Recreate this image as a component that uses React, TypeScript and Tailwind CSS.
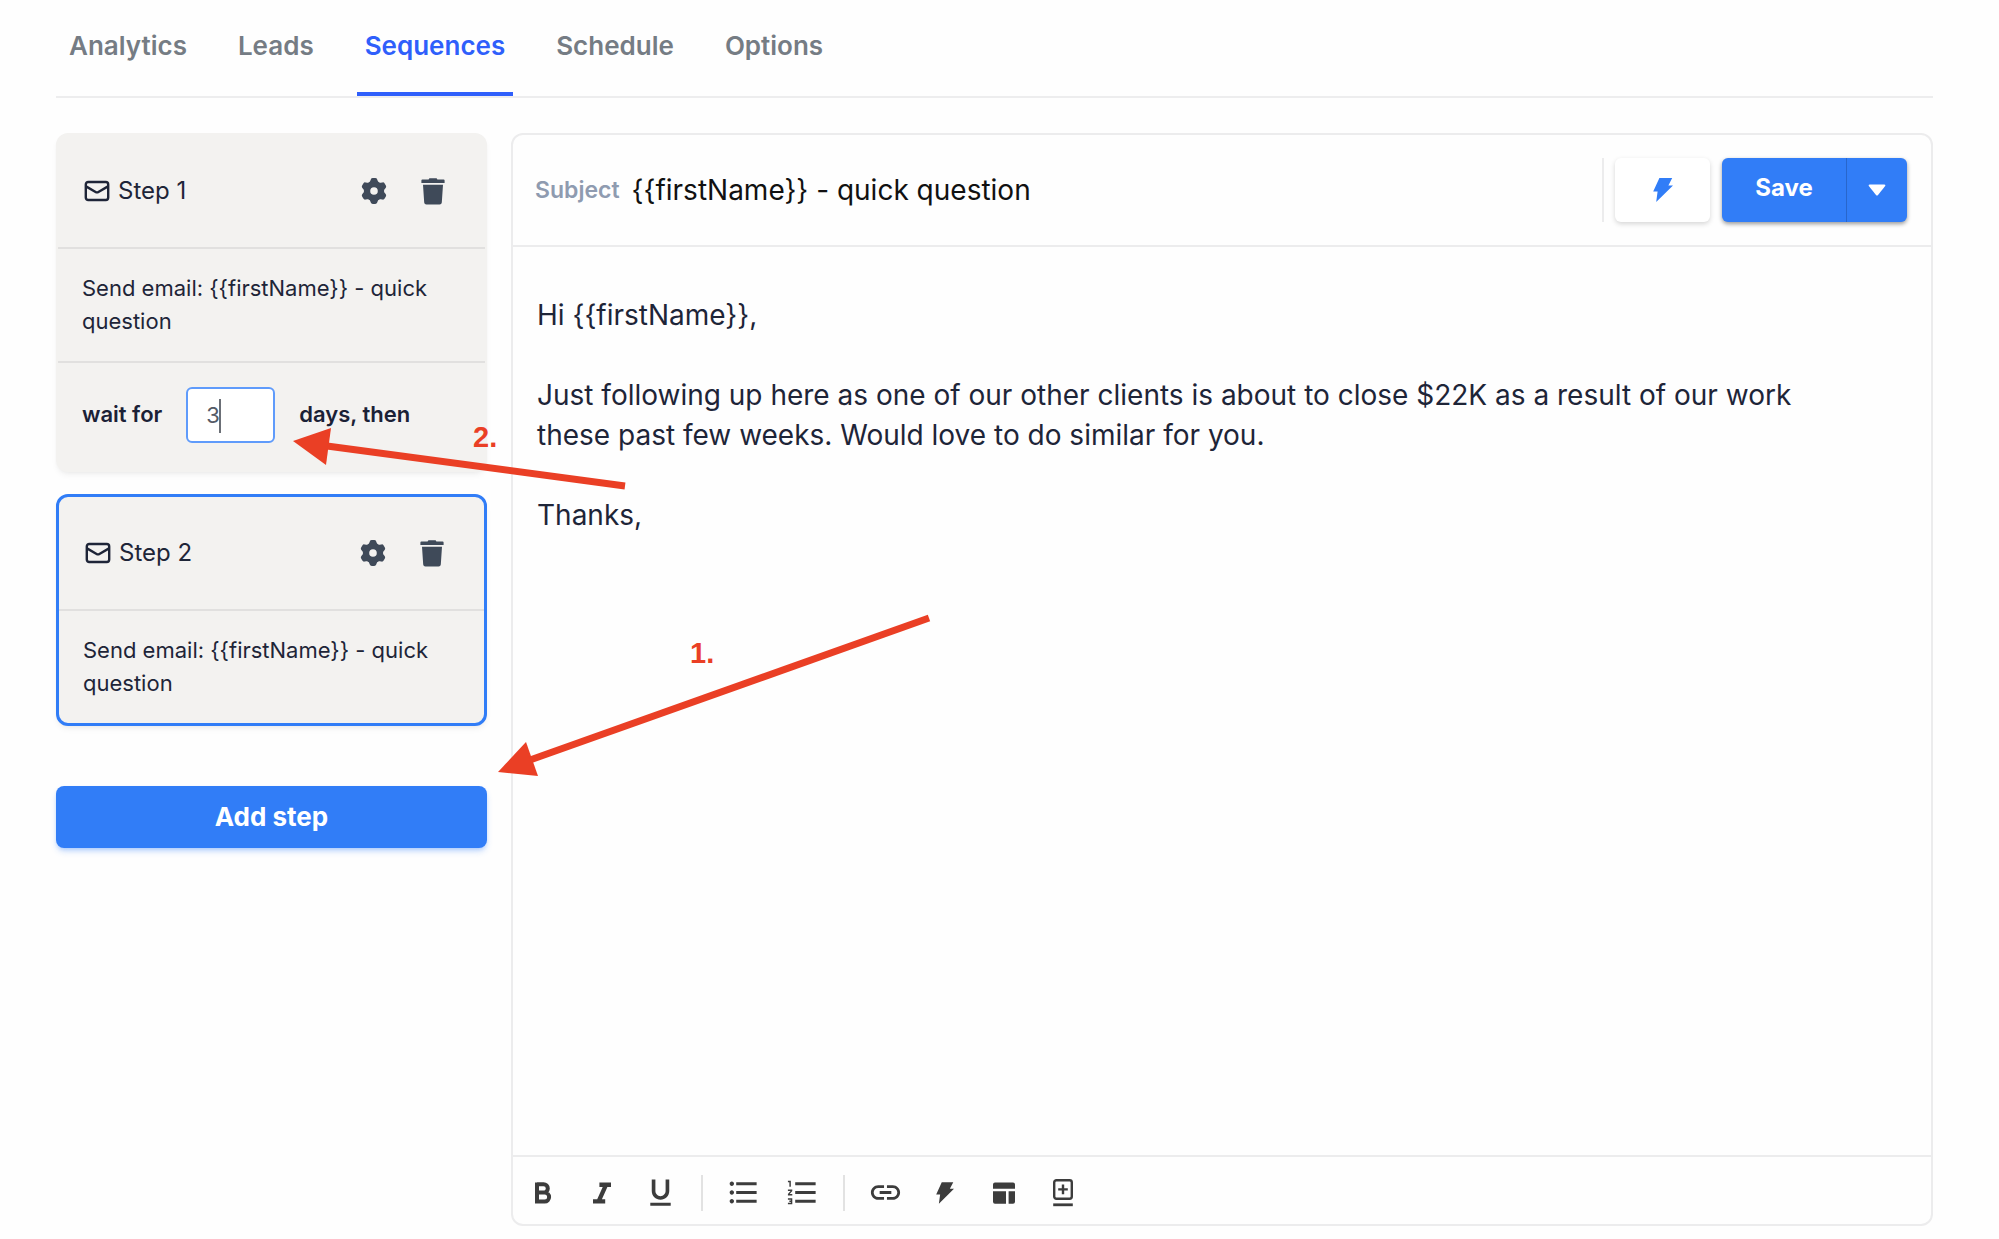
import React, { useState } from "react";
import { MdFormatListBulleted, MdFormatListNumbered, MdFormatUnderlined, MdLink } from "react-icons/md";

const TABS = ["Analytics", "Leads", "Sequences", "Schedule", "Options"];

function MailIcon() {
  return (
    <svg viewBox="0 0 26 22" className="h-[22px] w-[26px]" fill="none" stroke="currentColor" strokeWidth="2.4" aria-hidden="true">
      <rect x="1.8" y="2" width="22.4" height="18" rx="2.4" />
      <path d="M2 6.4L11.6 12a2.8 2.8 0 0 0 2.8 0L24 6.4" />
    </svg>
  );
}

function GearIcon() {
  return (
    <svg viewBox="0 0 26 26" className="size-[26px]" aria-hidden="true">
      <circle cx="13" cy="13" r="7" fill="none" stroke="currentColor" strokeWidth="6.4" />
      {[0, 60, 120, 180, 240, 300].map((angle) => (
        <path key={angle} d="M8.4 5L9.8 1.4Q10.2 0 11.8 0H14.2Q15.8 0 16.2 1.4L17.6 5Z" fill="currentColor" transform={`rotate(${angle} 13 13)`} />
      ))}
    </svg>
  );
}

function TrashIcon() {
  return (
    <svg viewBox="0 0 24 27" className="h-[27px] w-6" fill="currentColor" aria-hidden="true">
      <path d="M8.4 0.3H15.6L16.4 1.6H22.6Q23.6 1.6 23.6 2.6V5H0.4V2.6Q0.4 1.6 1.4 1.6H7.6ZM2 6.8H22L20.8 24.6Q20.6 26.6 18.6 26.6H5.4Q3.4 26.6 3.2 24.6Z" />
    </svg>
  );
}

function BoltIcon({ className }: { className: string }) {
  return (
    <svg viewBox="0 0 20 24" className={className} fill="currentColor" aria-hidden="true">
      <path d="M6.4 0H19.2L15.4 7.4H20L3.2 24L4.6 13.6H0.2Z" />
    </svg>
  );
}

function BoldIcon() {
  return (
    <svg viewBox="0 0 18 22" className="h-[22px] w-[18px]" fill="none" stroke="currentColor" strokeWidth="4" aria-hidden="true">
      <path d="M3 2.2H9.6a4.1 4.1 0 0 1 0 8.4H3M3 10.6H10.6a4.4 4.4 0 0 1 0 9H3M3 0.4V21.6" />
    </svg>
  );
}

function ItalicIcon() {
  return (
    <svg viewBox="0 0 18 22" className="h-[22px] w-[18px]" fill="currentColor" aria-hidden="true">
      <path d="M6.4 0.6H18V5H14.4L8.9 17.2H12.2V21.6H0V17.2H4.2L9.7 5H6.4Z" />
    </svg>
  );
}

function LayoutIcon() {
  return (
    <svg viewBox="0 0 22 22" className="size-[22px]" fill="currentColor" aria-hidden="true">
      <path d="M2 0.4H20a2 2 0 0 1 2 2V6.8H0V2.4A2 2 0 0 1 2 0.4ZM0 9.2H13V21.8H2a2 2 0 0 1-2-2ZM15.6 9.2H22V19.8a2 2 0 0 1-2 2H15.6Z" />
    </svg>
  );
}

function AddBlockIcon() {
  return (
    <svg viewBox="0 0 20 28" className="h-7 w-5" fill="none" stroke="currentColor" strokeWidth="2.4" aria-hidden="true">
      <rect x="1.2" y="1.2" width="17.6" height="18.6" rx="2.2" />
      <path d="M10 5.6V15.2M5.2 10.4H14.8" />
      <path d="M0.2 25.8H19.8" strokeWidth="2.8" />
    </svg>
  );
}

function StepHeader({ title }: { title: string }) {
  return (
    <div className="flex h-28 items-center pr-9 pl-[26px] text-[#1e2538]">
      <MailIcon />
      <h2 className="ml-2 grow text-[24px] leading-8">{title}</h2>
      <button type="button" aria-label={`${title} settings`} className="text-[#3f4a59]">
        <GearIcon />
      </button>
      <button type="button" aria-label={`Delete ${title}`} className="mr-1 ml-[34px] text-[#3f4a59]">
        <TrashIcon />
      </button>
    </div>
  );
}

function StepSummary() {
  return (
    <p className="border-t-2 border-[#e1e0df] py-[23px] pr-9 pl-6 text-[22px] leading-[33px] text-[#1e2538]">
      {"Send email: {{firstName}} - quick question"}
    </p>
  );
}

function Annotations() {
  return (
    <div className="pointer-events-none absolute top-0 left-0 text-[#ea3f25]">
      <svg width="1000" height="800" viewBox="0 0 1000 800" fill="currentColor" aria-hidden="true">
        <path d="M498 772L526 742L538 776Z" />
        <path d="M530 760L929 618" stroke="currentColor" strokeWidth="7" />
        <path d="M293 441L331 428L326 465Z" />
        <path d="M327 446L625 486" stroke="currentColor" strokeWidth="7" />
      </svg>
      <span className="absolute top-[421px] left-[473px] font-['Liberation_Sans',sans-serif] text-[29px] leading-8 font-bold">2.</span>
      <span className="absolute top-[637px] left-[690px] font-['Liberation_Sans',sans-serif] text-[29px] leading-8 font-bold">1.</span>
    </div>
  );
}

const TOOL = "flex w-[59px] shrink-0 items-center justify-center";

export default function App() {
  const [active, setActive] = useState("Sequences");
  const [days, setDays] = useState("3");
  const [subject, setSubject] = useState("{{firstName}} - quick question");
  const [body, setBody] = useState(
    "Hi {{firstName}},\n\nJust following up here as one of our other clients is about to close $22K as a result of our work these past few weeks. Would love to do similar for you.\n\nThanks,",
  );

  return (
    <div className="relative flex min-h-screen flex-col bg-[#fefefe] pr-[66px] pb-[13px] pl-14 font-['Inter',sans-serif]">
      <nav className="flex h-[98px] gap-[35px] border-b-2 border-[#ededee] pl-[5px]" aria-label="Campaign">
        {TABS.map((tab) => (
          <button
            key={tab}
            type="button"
            onClick={() => setActive(tab)}
            aria-current={tab === active ? "page" : undefined}
            className={
              tab === active
                ? "border-b-4 border-[#2f5ffb] px-2 pb-0.5 text-[26px] font-semibold text-[#2f5ffb]"
                : "border-b-4 border-transparent px-2 pb-0.5 text-[26px] font-semibold text-[#757c84]"
            }
          >
            {tab}
          </button>
        ))}
      </nav>

      <div className="mt-[35px] flex grow gap-6">
        <aside className="flex w-[431px] shrink-0 flex-col">
          <section className="rounded-xl border-2 border-[#f3f2f0] bg-[#f3f2f0] shadow-md shadow-black/5">
            <StepHeader title="Step 1" />
            <StepSummary />
            <div className="flex h-[109px] items-center border-t-2 border-[#e1e0df] pb-1 pl-6 text-[22px] font-semibold text-[#1b2136]">
              <label htmlFor="wait-days">wait for</label>
              <div className="relative mx-6">
                <input
                  id="wait-days"
                  value={days}
                  onChange={(e) => setDays(e.target.value)}
                  className="block h-14 w-[89px] rounded-md border-2 border-[#5f9bfb] bg-white px-[18px] text-[22px] font-normal text-[#555b66] caret-transparent outline-none"
                />
                <span className="pointer-events-none absolute top-3 left-[33px] h-[34px] w-0.5 bg-[#6b6f76]" />
              </div>
              <span>days, then</span>
            </div>
          </section>

          <section className="mt-[22px] rounded-xl border-[3px] border-[#317df7] bg-[#f3f2f0] shadow-md shadow-black/5">
            <StepHeader title="Step 2" />
            <StepSummary />
          </section>

          <button
            type="button"
            className="mt-[60px] h-[62px] rounded-lg bg-[#317df7] pb-0.5 text-[26px] font-bold text-white shadow-md shadow-[#317df7]/30"
          >
            Add step
          </button>
        </aside>

        <main className="flex min-w-0 grow flex-col rounded-xl border-2 border-[#ececed] bg-[#fefefe]">
          <header className="flex h-28 items-center border-b-2 border-[#ececed] pr-6 pl-[22px]">
            <label htmlFor="subject" className="text-[23px] font-semibold text-[#8f9bb0]">
              Subject
            </label>
            <input
              id="subject"
              value={subject}
              onChange={(e) => setSubject(e.target.value)}
              className="ml-3 min-w-0 grow text-[28px] text-[#111] outline-none"
            />
            <div className="h-16 w-0.5 bg-[#ececed]" />
            <button
              type="button"
              aria-label="Insert variable"
              className="ml-[11px] flex h-16 w-[95px] items-center justify-center rounded-md bg-white text-[#317df7] shadow-[0_2px_5px_rgba(0,0,0,0.16)]"
            >
              <BoltIcon className="h-6 w-5" />
            </button>
            <div className="ml-3 flex h-16 rounded-md bg-[#317df7] text-white shadow-[0_2px_4px_rgba(0,0,0,0.4)]">
              <button type="button" className="w-[125px] border-r border-[#2866cc] pb-1 text-[24px] font-bold">
                Save
              </button>
              <button type="button" aria-label="More save options" className="flex w-[60px] items-center justify-center">
                <svg viewBox="0 0 18 12" className="h-3 w-[18px]" fill="currentColor" aria-hidden="true">
                  <path d="M1.6 0.5H16.4Q18 0.7 17.2 2L10 11Q9 12 8 11L0.8 2Q0 0.7 1.6 0.5Z" />
                </svg>
              </button>
            </div>
          </header>

          <textarea
            aria-label="Email body"
            value={body}
            onChange={(e) => setBody(e.target.value)}
            className="grow resize-none py-12 pr-28 pl-6 text-[28px] leading-10 text-[#1e2538] outline-none"
          />

          <div className="flex h-[69px] items-center border-t-2 border-[#ececed] pt-1 text-[#3c3c3c]">
            <button type="button" aria-label="Bold" className={TOOL}><BoldIcon /></button>
            <button type="button" aria-label="Italic" className={TOOL}><ItalicIcon /></button>
            <button type="button" aria-label="Underline" className={TOOL}><MdFormatUnderlined size={35} /></button>
            <div className="mx-[11px] h-9 w-0.5 bg-[#e2e2e2]" />
            <button type="button" aria-label="Bulleted list" className={TOOL}><MdFormatListBulleted size={35} /></button>
            <button type="button" aria-label="Numbered list" className={TOOL}><MdFormatListNumbered size={35} /></button>
            <div className="mx-[11px] h-9 w-0.5 bg-[#e2e2e2]" />
            <button type="button" aria-label="Insert link" className={TOOL}><MdLink size={35} /></button>
            <button type="button" aria-label="Insert variable in body" className={TOOL}><BoltIcon className="h-[22px] w-[18px]" /></button>
            <button type="button" aria-label="Templates" className={TOOL}><LayoutIcon /></button>
            <button type="button" aria-label="Add block" className={TOOL}><AddBlockIcon /></button>
          </div>
        </main>
      </div>

      <Annotations />
    </div>
  );
}
